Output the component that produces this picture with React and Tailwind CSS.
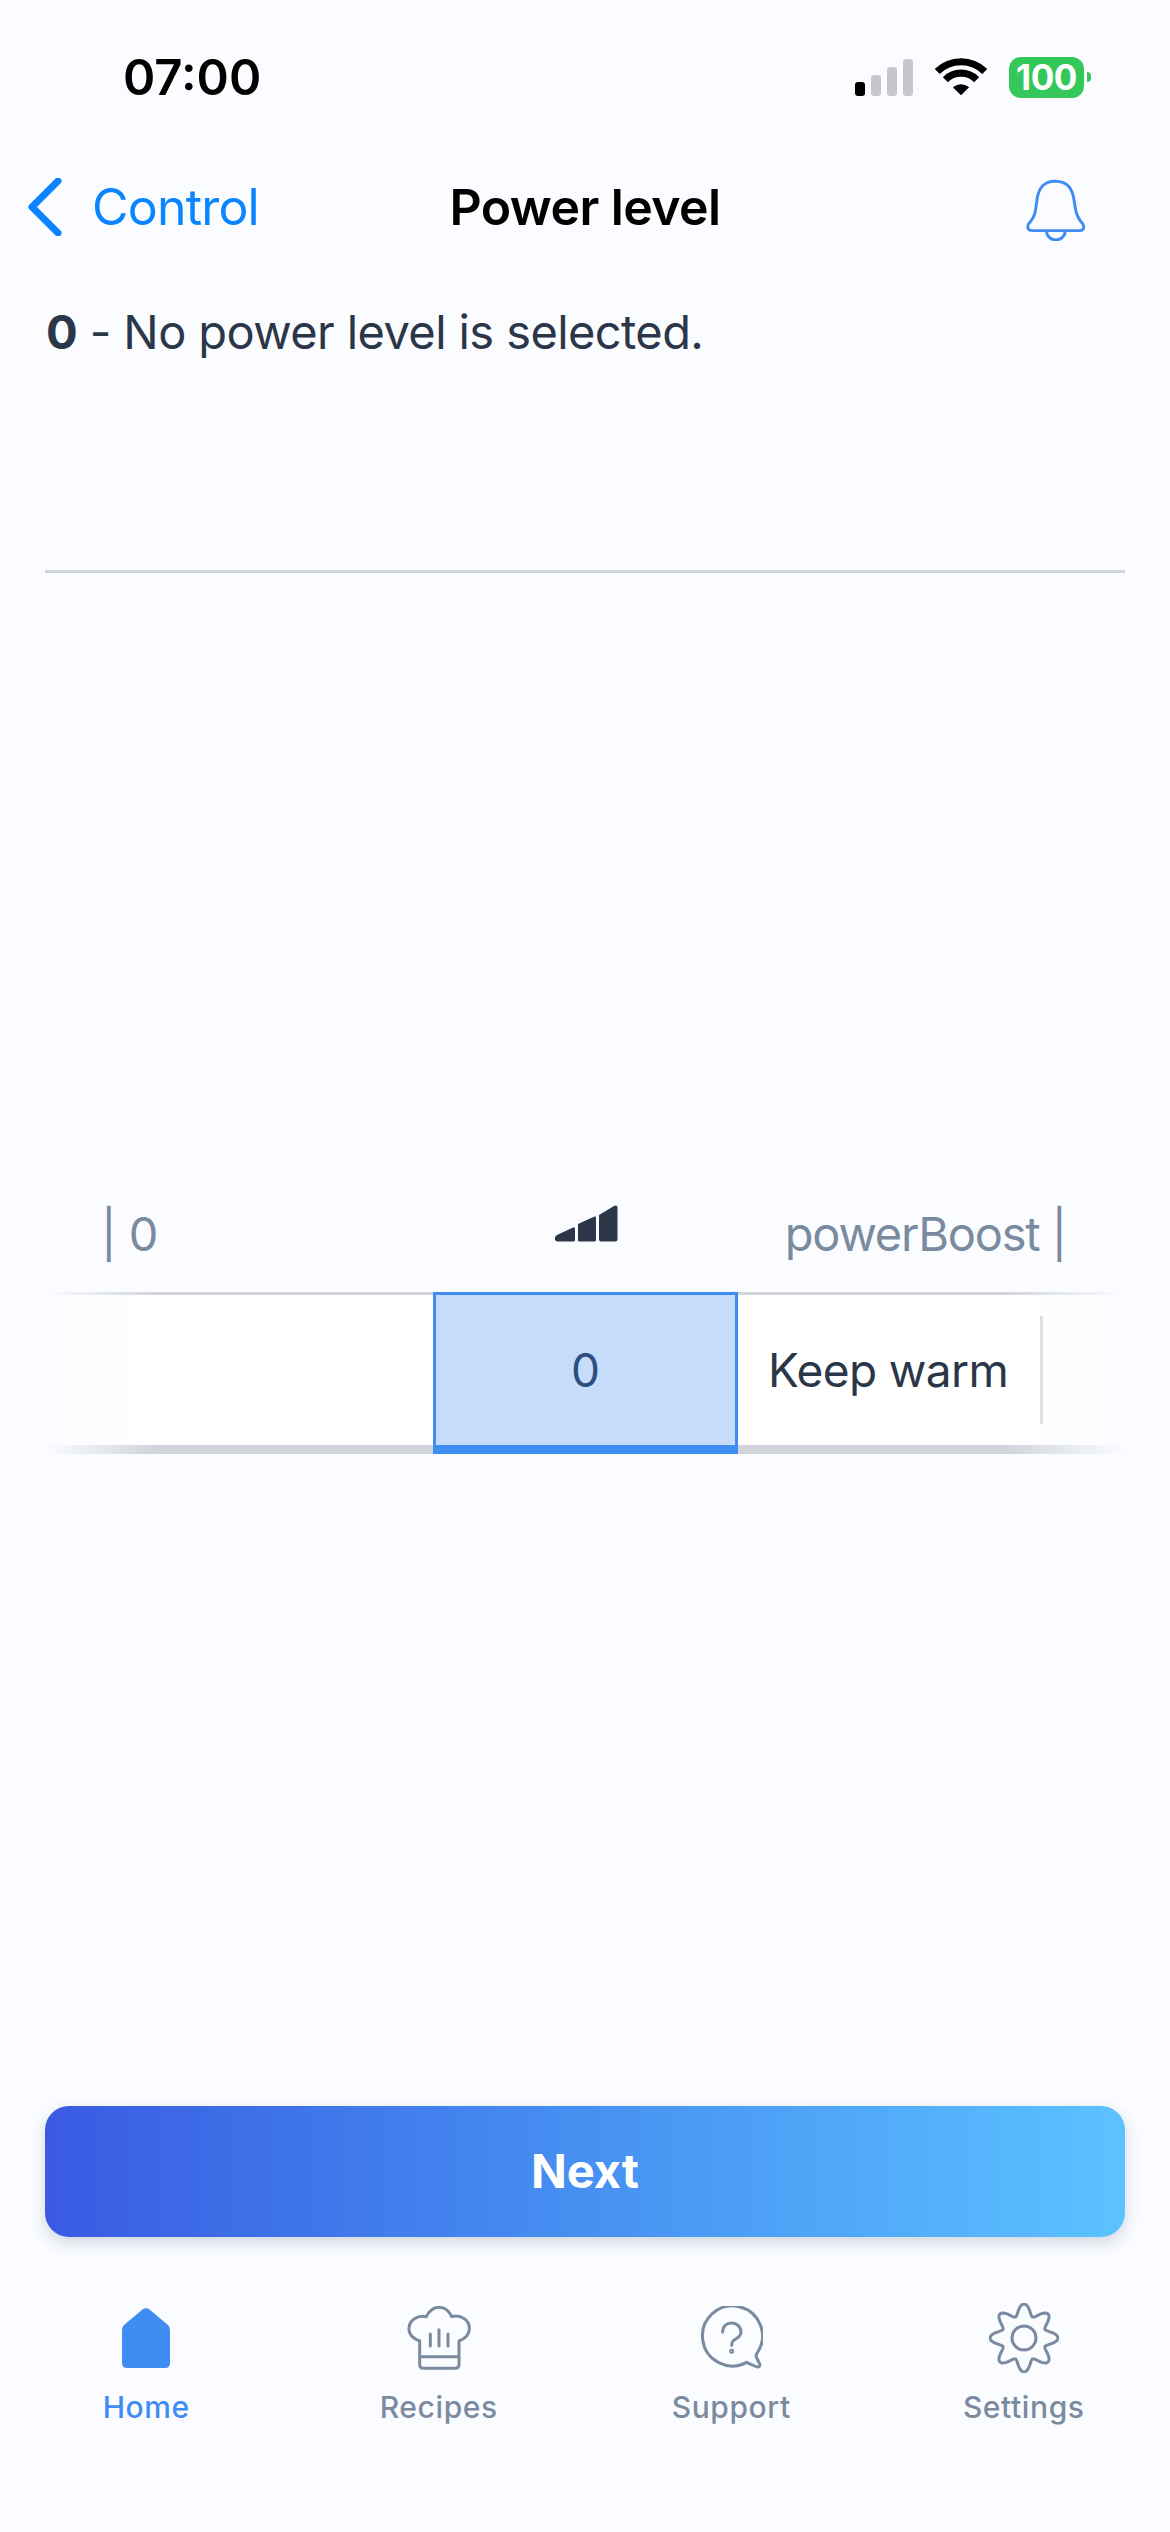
const GEAR_PATH =
  Array.from({ length: 160 }, (_, i) => {
    const a = (i / 160) * Math.PI * 2;
    const r = 85 + 17 * Math.cos(8 * a);
    const x = 160 + r * Math.sin(a);
    const y = 147 - r * Math.cos(a);
    return `${i === 0 ? "M" : "L"}${x.toFixed(1)} ${y.toFixed(1)}`;
  }).join(" ") + " Z";

function StatusBar() {
  return (
    <div className="mt-[54px] h-[46px] flex items-center justify-between pl-[123px] pr-[79px]">
      <span className="text-[49px] leading-none font-semibold text-black">07:00</span>
      <div className="flex items-center">
        <div className="flex items-end gap-[6px] h-[37px]">
          <div className="w-[10px] h-[14px] rounded-[3px] bg-black" />
          <div className="w-[10px] h-[21px] rounded-[3px] bg-[#c7c7c9]" />
          <div className="w-[10px] h-[29px] rounded-[3px] bg-[#c7c7c9]" />
          <div className="w-[10px] h-[37px] rounded-[3px] bg-[#c7c7c9]" />
        </div>
        <svg className="ml-[22px] w-[52px] h-[38px]" viewBox="408 87 152 112" fill="none">
          <path d="M414 127 A99.5 99.5 0 0 1 554 127" stroke="#000" strokeWidth="21" />
          <path d="M438 151 A64.5 64.5 0 0 1 530 151" stroke="#000" strokeWidth="21" />
          <path d="M484 197 L460 173 Q484 155 508 173 Z" fill="#000" />
        </svg>
        <div className="ml-[22px] w-[75px] h-[41px] rounded-[12px] bg-[#34c759] flex items-center justify-center text-[35px] leading-none font-bold text-white tracking-[-0.5px]">
          100
        </div>
        <div className="ml-[3px] w-[4px] h-[10px] rounded-r-full bg-[#34c759]" />
      </div>
    </div>
  );
}

function NavBar() {
  return (
    <div className="mt-[57px] h-[100px] flex items-center justify-between relative">
      <div className="flex items-center pl-[28px] gap-[30px]">
        <svg className="w-[34px] h-[58px]" viewBox="0 0 34 58" fill="none">
          <path d="M30 3 L4 29 L30 55" stroke="#0a84ff" strokeWidth="7" strokeLinecap="round" strokeLinejoin="round" />
        </svg>
        <span className="text-[50px] leading-none text-[#0a84ff] tracking-[-0.8px]">Control</span>
      </div>
      <h1 className="absolute left-0 right-0 text-center text-[50px] leading-none font-semibold text-black tracking-[-0.6px]">
        Power level
      </h1>
      <svg className="mr-[83px] mt-[5px] w-[62px] h-[63px]" viewBox="672 430 190 194" fill="none">
        <path
          d="M765 440 C725 440 712 465 708 500 C703 535 703 545 690 562 L682 572 Q675 592 695 592 H838 Q858 592 850 572 L842 562 C830 545 828 535 823 500 C818 465 805 440 765 440 Z M738 594 A28 26 0 0 0 795 594"
          stroke="#3f8cf2"
          strokeWidth="9"
          strokeLinejoin="round"
        />
      </svg>
    </div>
  );
}

function SignalIcon() {
  return (
    <svg className="w-[63px] h-[37px]" viewBox="0 0 63 37" fill="#2b3748">
      <path d="M2 30 L18 22.5 Q20 21.5 20 24 V35 Q20 36.5 18.500 36.500 H2 Q-1 35 0 32 Z" />
      <path d="M23 19 L39.500 11.500 Q41 11 41 13 V35 Q41 36.500 39.500 36.500 H24.500 Q23 36.500 23 35 Z" />
      <path d="M44 10 L59 1 Q62.500 -0.500 62.500 3 V34 Q62.500 36.500 60 36.500 H46 Q44 36.500 44 34 Z" />
    </svg>
  );
}

function LevelSlider() {
  return (
    <div className="mt-[29px] mx-[45px] h-[162px] flex relative">
      <div className="w-[388px] bg-white border-t-[3px] border-b-[9px] border-[#d1d5db]" />
      <div className="w-[305px] bg-[#c6dcfa] border-[3px] border-b-[9px] border-[#3f8cf2] flex items-center justify-center text-[46px] leading-none text-[#2d4f7f]">
        0
      </div>
      <div className="flex-1 bg-white border-t-[3px] border-b-[9px] border-[#d1d5db] flex items-center pl-[30px]">
        <span className="text-[46px] leading-none text-[#2b3748] whitespace-nowrap tracking-[-0.6px]">Keep warm</span>
        <div className="ml-[32px] w-[3px] h-[108px] bg-[#d1d5db]" />
      </div>
      <div className="absolute inset-y-0 left-0 w-[110px] bg-gradient-to-r from-[#fafcff] to-transparent" />
      <div className="absolute inset-y-0 right-0 w-[120px] bg-gradient-to-l from-[#fafcff] to-transparent" />
    </div>
  );
}

function TabItem({ label, active, children }) {
  return (
    <div className="flex flex-col items-center">
      <div className="h-[72px] flex items-center justify-center">{children}</div>
      <span className={`mt-[15px] text-[30px] leading-[36px] font-medium tracking-[0.6px] ${active ? "text-[#3f8cf2]" : "text-[#7a8ba0]"}`}>
        {label}
      </span>
    </div>
  );
}

function TabBar() {
  return (
    <div className="mt-[65px] mb-[107px] grid grid-cols-4">
      <TabItem label="Home" active>
        <svg className="w-[48px] h-[60px]" viewBox="0 0 48 60" fill="#3f8cf2">
          <path d="M20.500 1.500 Q24 -1 27.500 1.500 L46 17 Q48 19 48 22 V55 Q48 60 43 60 H5 Q0 60 0 55 V22 Q0 19 2 17 Z" />
        </svg>
      </TabItem>
      <TabItem label="Recipes">
        <svg className="w-[64px] h-[64px]" viewBox="82 53 192 192" fill="none" stroke="#7a8ba0" strokeWidth="9" strokeLinecap="round" strokeLinejoin="round">
          <path d="M120 205 V158 C98 150 86 135 88 118 C90 95 112 80 140 85 C150 65 165 57 178 57 C195 57 208 68 216 85 C245 78 268 95 269 118 C270 135 258 150 238 158 V228 Q238 240 226 240 H132 Q120 240 120 228 Z M120 205 H238 M152 137 V173 M178 124 V173 M205 137 V173" />
        </svg>
      </TabItem>
      <TabItem label="Support">
        <svg className="w-[64px] h-[64px]" viewBox="56 52 192 192" fill="none" stroke="#7a8ba0" strokeWidth="9" strokeLinecap="round" strokeLinejoin="round">
          <path d="M199 221 A90 90 0 1 1 231 192 Q226 198 228 205 L238 226 Q240 236 230 235 L205 224 Q200 222 199 221 Z" />
          <path d="M127 130 C127 112 140 103 153 103 C170 103 182 115 182 130 C182 145 170 148 160 155 Q154 160 154 170" />
          <circle cx="154" cy="188" r="3" />
        </svg>
      </TabItem>
      <TabItem label="Settings">
        <svg className="w-[70px] h-[70px]" viewBox="55 42 210 210" fill="none" stroke="#7a8ba0" strokeWidth="9" strokeLinejoin="round">
          <path d={GEAR_PATH} />
          <circle cx="160" cy="147" r="36" />
        </svg>
      </TabItem>
    </div>
  );
}

export default function App() {
  return (
    <div className="w-[1170px] h-[2532px] bg-[#fafcff] flex flex-col overflow-hidden font-['Inter',sans-serif]">
      <StatusBar />
      <NavBar />
      <p className="mt-[45px] px-[46px] text-[47px] leading-[60px] text-[#2b3748] tracking-[-0.6px]">
        <span className="font-bold">0</span> - No power level is selected.
      </p>
      <div className="mt-[208px] mx-[45px] h-[3px] bg-[#d1d5db]" />
      <div className="mt-[630px] h-[60px] flex items-center justify-between pl-[101px] pr-[104px] relative">
        <span className="text-[47px] leading-none text-[#7a8ba0] tracking-[-0.6px]">| 0</span>
        <div className="absolute left-[555px] top-[2px]">
          <SignalIcon />
        </div>
        <span className="text-[47px] leading-none text-[#7a8ba0] tracking-[-1.2px]">powerBoost |</span>
      </div>
      <LevelSlider />
      <div className="flex-1" />
      <button className="mx-[45px] h-[131px] rounded-[24px] bg-gradient-to-r from-[#3a5ae2] to-[#5cc2ff] shadow-[0_6px_16px_rgba(30,50,90,0.18)] text-[47px] font-bold text-white">
        Next
      </button>
      <TabBar />
    </div>
  );
}
